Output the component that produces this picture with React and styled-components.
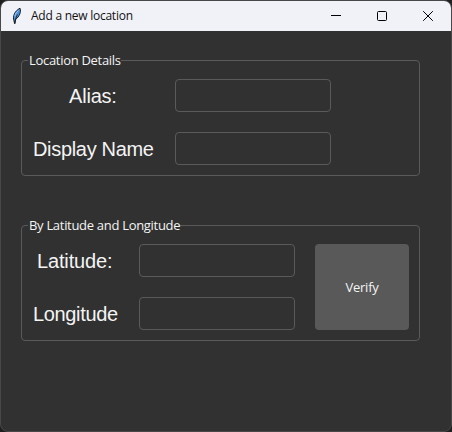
import React from 'react';
import styled, { createGlobalStyle } from 'styled-components';

const GlobalStyle = createGlobalStyle`
  * { box-sizing: border-box; }
  body { margin: 0; background: #1f1f1f; overflow: hidden; }
`;

const Window = styled.div`
  width: 452px;
  height: 432px;
  border: 1px solid #484848;
  border-radius: 8px;
  overflow: hidden;
  background: #313131;
  display: flex;
  flex-direction: column;
`;

const TitleBar = styled.header`
  height: 30px;
  flex: none;
  background: #f1f2f8;
  display: flex;
  align-items: center;
  padding-left: 10px;
`;

const Title = styled.h1`
  flex: 1;
  margin: 0 0 0 9px;
  font: 400 12px/16px 'Open Sans', 'Noto Sans', sans-serif;
  letter-spacing: ${(p) => p.$tracking};
  color: #111;
  white-space: nowrap;
`;

const WindowButton = styled.button`
  width: 46px;
  height: 30px;
  padding: 0;
  border: 0;
  background: none;
  display: grid;
  place-items: center;
`;

const Controls = styled.div`
  display: flex;
`;

const Content = styled.main`
  padding: 29px 31px 0 20px;
  display: flex;
  flex-direction: column;
  gap: 49px;
`;

const Group = styled.section`
  height: 116px;
  border: 1px solid #5a5a5a;
  border-radius: 4px;
  display: flex;
  flex-direction: column;
`;

const Legend = styled.h2`
  align-self: flex-start;
  flex: none;
  width: ${(p) => p.$width}px;
  height: 18px;
  margin: -10px 0 0 6px;
  padding-left: 1px;
  background: #313131;
  color: #f4f4f4;
  font: 400 13px/18px 'Open Sans', 'Noto Sans', sans-serif;
  letter-spacing: ${(p) => p.$tracking};
  white-space: nowrap;
`;

const Fields = styled.div`
  margin: 10px 0 0 11px;
  display: grid;
  grid-template-columns: ${(p) => p.$columns};
  grid-template-rows: 33px 33px;
  row-gap: 20px;
`;

const Label = styled.label`
  justify-self: start;
  padding-left: ${(p) => p.$indent || 0}px;
  font: 400 20px/35px 'Liberation Sans', Arial, sans-serif;
  letter-spacing: ${(p) => p.$tracking};
  color: #f4f4f4;
  white-space: nowrap;
`;

const Input = styled.input`
  width: 156px;
  height: 33px;
  padding: 0 8px;
  border: 1px solid #5a5a5a;
  border-radius: 4px;
  background: transparent;
  color: #f4f4f4;
  outline: none;
`;

const VerifyButton = styled.button`
  grid-column: 3;
  grid-row: 1 / 3;
  width: 94px;
  height: 86px;
  padding: 0;
  border: 0;
  border-radius: 4px;
  background: #595959;
  color: #f4f4f4;
  font: 400 13px/18px 'Open Sans', 'Noto Sans', sans-serif;
  letter-spacing: -0.25px;
`;

function Feather() {
  return (
    <svg width="11" height="18" viewBox="0 0 11 18">
      <path d="M3 13.8C1.4 9.5 3.6 4 9 1.2C10.4 5 8.3 9.6 4.6 12.4L3.6 16.6Z" fill="#4b91dc" stroke="#151a22" strokeWidth="1" />
      <path d="M6.6 7.5C5.2 9.4 4.4 12 4 16.8" fill="none" stroke="#10151c" strokeWidth="0.8" />
      <path d="M3.8 9.5C4.2 6.6 5.4 5 7.4 3.6" fill="none" stroke="#a9d2fa" strokeWidth="0.9" />
    </svg>
  );
}

export default function App() {
  return (
    <>
      <GlobalStyle />
      <Window>
        <TitleBar>
          <Feather />
          <Title $tracking="-0.25px">Add a new location</Title>
          <Controls>
            <WindowButton aria-label="Minimize">
              <svg width="10" height="10" viewBox="0 0 10 10"><path d="M0 4.5H10" stroke="#000" /></svg>
            </WindowButton>
            <WindowButton aria-label="Maximize">
              <svg width="10" height="10" viewBox="0 0 10 10"><rect x=".5" y=".5" width="9" height="9" rx="1" fill="none" stroke="#000" /></svg>
            </WindowButton>
            <WindowButton aria-label="Close">
              <svg width="10" height="10" viewBox="0 0 10 10"><path d="M.2.2L9.8 9.8M9.8.2L.2 9.8" stroke="#000" /></svg>
            </WindowButton>
          </Controls>
        </TitleBar>
        <Content>
          <Group>
            <Legend $width={93} $tracking="-0.3px">Location Details</Legend>
            <Fields $columns="142px 156px">
              <Label $indent={36} $tracking="-0.2px">Alias:</Label>
              <Input />
              <Label $tracking="-0.32px">Display Name</Label>
              <Input />
            </Fields>
          </Group>
          <Group>
            <Legend $width={152} $tracking="-0.3px">By Latitude and Longitude</Legend>
            <Fields $columns="106px 176px 94px">
              <Label $indent={4} $tracking="-0.15px">Latitude:</Label>
              <Input />
              <Label $tracking="-0.35px">Longitude</Label>
              <Input />
              <VerifyButton>Verify</VerifyButton>
            </Fields>
          </Group>
        </Content>
      </Window>
    </>
  );
}
